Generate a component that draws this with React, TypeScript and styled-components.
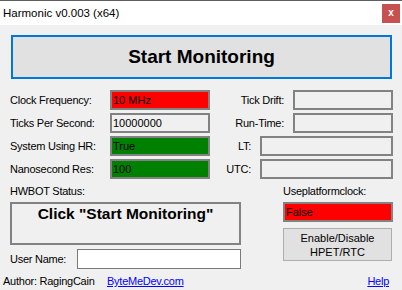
import React from 'react';
import styled, {createGlobalStyle} from "styled-components";

const GlobalStyle = createGlobalStyle`
  html, body {
    margin: 0;
    padding: 0;
    background: #f0f0f0;
  }
  body {
    font-family: "Liberation Sans", Arial, sans-serif;
    color: #000;
  }
  * {
    box-sizing: border-box;
  }
`

const leftFields = [
    {label: 'Clock Frequency:', value: '10 MHz', bg: '#ff0000'},
    {label: 'Ticks Per Second:', value: '10000000', bg: '#f0f0f0'},
    {label: 'System Using HR:', value: 'True', bg: '#008000'},
    {label: 'Nanosecond Res:', value: '100', bg: '#008000'},
]

const rightFields = [
    {label: 'Tick Drift:', width: 100},
    {label: 'Run-Time:', width: 100},
    {label: 'LT:', width: 133},
    {label: 'UTC:', width: 133},
]

export default function App() {
    return (
        <>
            <GlobalStyle/>
            <Window>
                <TitleBar>
                    <Title>Harmonic v0.003 (x64)</Title>
                    <CloseButton>x</CloseButton>
                </TitleBar>

                <Body>
                    <StartButton type={'button'}>Start Monitoring</StartButton>

                    <Fields>
                        <Column>
                            {leftFields.map((f) => {
                                return (
                                    <FieldRow key={f.label}>
                                        <Label $width={100}>{f.label}</Label>
                                        <Box $width={100} $bg={f.bg}>{f.value}</Box>
                                    </FieldRow>
                                )
                            })}
                        </Column>
                        <Column>
                            {rightFields.map((f) => {
                                return (
                                    <RightRow key={f.label}>
                                        <Label>{f.label}</Label>
                                        <Box $width={f.width} $bg={'#f0f0f0'}/>
                                    </RightRow>
                                )
                            })}
                        </Column>
                    </Fields>

                    <Bottom>
                        <Stack>
                            <SectionLabel>HWBOT Status:</SectionLabel>
                            <StatusBox>Click "Start Monitoring"</StatusBox>
                            <UserRow>
                                <Label $width={67}>User Name:</Label>
                                <Input/>
                            </UserRow>
                        </Stack>
                        <RightStack>
                            <SectionLabel>Useplatformclock:</SectionLabel>
                            <Box $width={110} $bg={'#ff0000'}>False</Box>
                            <HpetButton type={'button'}>Enable/Disable<br/>HPET/RTC</HpetButton>
                        </RightStack>
                    </Bottom>
                </Body>

                <Footer>
                    <Author>Author: RagingCain</Author>
                    <Link href="#">ByteMeDev.com</Link>
                    <HelpLink href="#">Help</HelpLink>
                </Footer>
            </Window>
        </>
    );
}

const Window = styled.div`
  width: 402px;
  height: 290px;
  background: #f0f0f0;
  display: flex;
  flex-direction: column;
  overflow: hidden;
`

const TitleBar = styled.div`
  height: 25px;
  border-top: 1px solid #5e5e5e;
  background: #fff;
  display: flex;
  align-items: center;
  justify-content: space-between;
  padding: 0 2px 0 3px;
`

const Title = styled.span`
  font-size: 11.5px;
`

const CloseButton = styled.div`
  width: 18px;
  height: 19px;
  background: #c75050;
  color: #fff;
  font-size: 10px;
  font-weight: 700;
  display: flex;
  align-items: center;
  justify-content: center;
  padding-bottom: 2px;
`

const Body = styled.div`
  padding: 10px 9px 0 10px;
`

const StartButton = styled.button`
  display: block;
  margin: 0 1px;
  width: calc(100% - 2px);
  height: 44px;
  padding: 0;
  border: 2px solid #0078d7;
  background: #e1e1e1;
  font-family: "Liberation Sans", Arial, sans-serif;
  font-size: 19px;
  font-weight: 700;
  color: #000;
`

const Fields = styled.div`
  margin-top: 11px;
  display: grid;
  grid-template-columns: 200px 1fr;
`

const Column = styled.div`
  display: flex;
  flex-direction: column;
  gap: 3px;
`

const FieldRow = styled.div`
  display: flex;
  align-items: center;
  height: 20px;
`

const RightRow = styled(FieldRow)`
  justify-content: flex-end;
  gap: 9px;
`

const Label = styled.span<{ $width?: number }>`
  ${p => p.$width ? `width: ${p.$width}px; flex-shrink: 0;` : ''}
  font-size: 11px;
  letter-spacing: -0.25px;
  white-space: nowrap;
`

const Box = styled.div<{ $width: number, $bg: string }>`
  width: ${p => p.$width}px;
  height: 20px;
  border: 2px solid #828282;
  background: ${p => p.$bg};
  font-size: 11px;
  line-height: 16px;
  padding: 0 1px;
  white-space: nowrap;
`

const Bottom = styled.div`
  margin-top: 6px;
  display: grid;
  grid-template-columns: 231px 1fr;
`

const Stack = styled.div`
  display: flex;
  flex-direction: column;
`

const RightStack = styled.div`
  width: 110px;
  justify-self: end;
  display: flex;
  flex-direction: column;
`

const SectionLabel = styled.div`
  height: 13px;
  line-height: 13px;
  margin-bottom: 4px;
  font-size: 11px;
  letter-spacing: -0.25px;
`

const StatusBox = styled.div`
  height: 43px;
  border: 2px solid #828282;
  padding-top: 1px;
  text-align: center;
  font-size: 15.5px;
  line-height: 18px;
  font-weight: 700;
`

const UserRow = styled.div`
  margin-top: 4px;
  display: flex;
  align-items: center;
  height: 20px;
`

const Input = styled.div`
  flex: 1;
  height: 20px;
  border: 1px solid #7a7a7a;
  background: #fff;
`

const HpetButton = styled.button`
  margin-top: 6px;
  width: 109px;
  height: 33px;
  padding: 0;
  border: 1px solid #adadad;
  background: #e1e1e1;
  font-family: "Liberation Sans", Arial, sans-serif;
  font-size: 11px;
  line-height: 14px;
  color: #000;
`

const Footer = styled.div`
  display: flex;
  align-items: baseline;
  padding: 6px 13px 0 3px;
  font-size: 11px;
  line-height: 13px;
  letter-spacing: -0.25px;
`

const Author = styled.span`
  width: 104px;
`

const Link = styled.a`
  color: #0000ff;
  text-decoration: underline;
`

const HelpLink = styled(Link)`
  margin-left: auto;
`
